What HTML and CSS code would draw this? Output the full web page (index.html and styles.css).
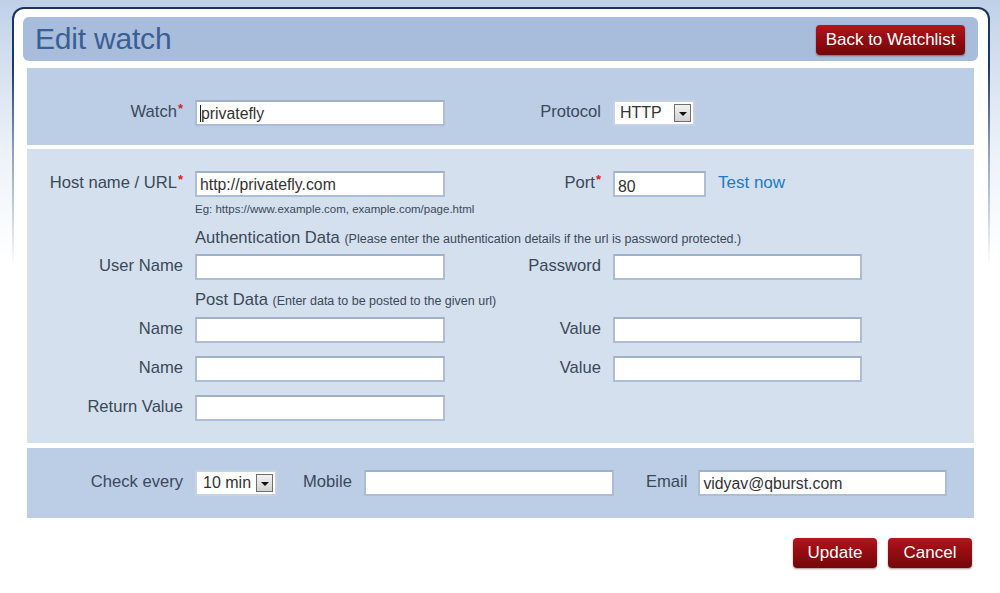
FILE: index.html
```html
<!DOCTYPE html>
<html>
<head>
<meta charset="utf-8">
<link rel="stylesheet" href="styles.css">
</head>
<body>
<div class="frame">
  <div class="inner">
    <div class="header">
      <h1 class="title">Edit watch</h1>
      <a class="btn btn-back">Back to Watchlist</a>
    </div>

    <div class="section s1">
      <div class="grid">
        <label class="lbl">Watch<sup>*</sup></label>
        <div class="input caret">privatefly</div>
        <label class="lbl">Protocol</label>
        <div class="select sel-proto"><span>HTTP</span><i class="drop"></i></div>
      </div>
    </div>

    <div class="section s2">
      <div class="grid">
        <label class="lbl">Host name / URL<sup>*</sup></label>
        <div class="input">http://privatefly.com</div>
        <label class="lbl">Port<sup>*</sup></label>
        <div class="port-cell"><div class="input port">80</div><a class="link">Test now</a></div>
      </div>
      <div class="hint">Eg: https://www.example.com, example.com/page.html</div>
      <div class="subhead auth">Authentication Data <small>(Please enter the authentication details if the url is password protected.)</small></div>
      <div class="grid">
        <label class="lbl">User Name</label>
        <div class="input"></div>
        <label class="lbl">Password</label>
        <div class="input wide2"></div>
      </div>
      <div class="subhead post">Post Data <small>(Enter data to be posted to the given url)</small></div>
      <div class="grid">
        <label class="lbl">Name</label>
        <div class="input"></div>
        <label class="lbl">Value</label>
        <div class="input wide2"></div>
      </div>
      <div class="grid gap-row">
        <label class="lbl">Name</label>
        <div class="input"></div>
        <label class="lbl">Value</label>
        <div class="input wide2"></div>
      </div>
      <div class="grid gap-row">
        <label class="lbl">Return Value</label>
        <div class="input"></div>
      </div>
    </div>

    <div class="section s3">
      <label class="lbl lbl-check">Check every</label>
      <div class="select sel-min"><span>10 min</span><i class="drop"></i></div>
      <label class="lbl lbl-mobile">Mobile</label>
      <div class="input"></div>
      <label class="lbl lbl-email">Email</label>
      <div class="input wide2">vidyav@qburst.com</div>
    </div>

    <div class="actions">
      <a class="btn btn-sm">Update</a>
      <a class="btn btn-sm">Cancel</a>
    </div>
  </div>
</div>
</body>
</html>
```

FILE: styles.css
```css
html, body {
  margin: 0;
  padding: 0;
}
body {
  width: 1000px;
  height: 593px;
  overflow: hidden;
  font-family: "Liberation Sans", Arial, sans-serif;
  background: linear-gradient(to bottom, #bfd0e7 0, #d4e0ef 60px, #eef3f9 160px, #ffffff 260px);
}
.frame {
  margin: 7px 0 0 12px;
  width: 978px;
  padding: 2px 2px 0 2px;
  box-sizing: border-box;
  border-radius: 12px 12px 0 0;
  background: linear-gradient(to bottom, #1a355c 0, #1f3b63 60px, rgba(60, 90, 130, 0.55) 140px, rgba(255, 255, 255, 0) 260px);
}
.inner {
  background: #ffffff;
  border-radius: 10px 10px 0 0;
  padding: 8px 10px 30px 9px;
  height: 584px;
  box-sizing: border-box;
}
.header {
  height: 44px;
  background: #a8bddb;
  border-radius: 6px;
  display: flex;
  align-items: center;
  justify-content: space-between;
  padding: 0 13px 0 12px;
}
.title {
  margin: 0;
  font-weight: normal;
  font-size: 30px;
  color: #3a5e96;
  letter-spacing: -0.2px;
}
.btn {
  display: inline-flex;
  align-items: center;
  justify-content: center;
  height: 30px;
  box-sizing: border-box;
  color: #ffffff;
  font-size: 17px;
  border-radius: 4px;
  background: linear-gradient(to bottom, #b3161b 0, #950c11 45%, #740709 100%);
  box-shadow: 0 1px 2px rgba(60, 0, 0, 0.45);
}
.btn-back {
  width: 149px;
  margin-top: 1px;
}
.section {
  margin: 0 4px;
}
.s1 {
  margin-top: 7px;
  background: #bbcee6;
  padding: 32px 0 19px;
}
.s2 {
  margin-top: 4px;
  background: #d4e0ee;
  padding: 22px 0 22px;
}
.s3 {
  margin-top: 5px;
  background: #bbcee6;
  padding: 22px 0 22px;
  display: flex;
  align-items: center;
}
.grid {
  display: grid;
  grid-template-columns: 156px 250px 144px auto;
  column-gap: 12px;
  align-items: center;
}
.gap-row {
  margin-top: 13px;
}
.lbl {
  font-size: 16.6px;
  color: #3b4858;
  text-align: right;
  white-space: nowrap;
  line-height: 20px;
  position: relative;
  top: -1px;
}
.lbl sup {
  color: #d2232a;
  font-size: 13px;
  font-weight: bold;
  vertical-align: 0;
  position: relative;
  top: -4px;
  margin-left: 1px;
}
.input {
  width: 250px;
  height: 26px;
  box-sizing: border-box;
  background: #ffffff;
  border: 2px solid #adbdd4;
  border-top-color: #9fb0ca;
  font-size: 15.8px;
  color: #333333;
  padding: 3px 0 0 3px;
  line-height: 18px;
  white-space: nowrap;
}
.caret::first-letter {
  border-left: 1px solid #222;
}
.wide2 {
  width: 249px;
}
.port-cell {
  display: flex;
  align-items: center;
}
.input.port {
  width: 93px;
  padding-top: 5px;
}
.link {
  margin-left: 12px;
  font-size: 17px;
  color: #1b7bc8;
  position: relative;
  top: -1px;
}
.select {
  height: 26px;
  box-sizing: border-box;
  background: #ffffff;
  border: 2px solid #c6d3e5;
  display: flex;
  align-items: center;
  justify-content: space-between;
  padding: 0 2px 0 5px;
  font-size: 16px;
  color: #333333;
}
.sel-proto {
  width: 82px;
}
.sel-min {
  width: 82px;
  padding-left: 6px;
}
.drop {
  width: 17px;
  height: 18px;
  box-sizing: border-box;
  border: 1px solid #6f6f6f;
  background: linear-gradient(to bottom, #f2f2f2, #d2d2d2);
  display: flex;
  align-items: center;
  justify-content: center;
}
.drop::after {
  content: "";
  width: 0;
  height: 0;
  border-left: 4px solid transparent;
  border-right: 4px solid transparent;
  border-top: 4px solid #111111;
  margin-top: 1px;
}
.hint {
  margin: 4px 0 0 168px;
  font-size: 11.5px;
  line-height: 16px;
  color: #3b4858;
}
.subhead {
  margin-left: 168px;
  font-size: 16.6px;
  color: #3b4858;
  line-height: 18px;
}
.subhead small {
  font-size: 12.5px;
}
.auth {
  margin-top: 12px;
  margin-bottom: 6px;
}
.post {
  margin-top: 11px;
  margin-bottom: 7px;
}
.lbl-check {
  width: 156px;
  margin-right: 12px;
}
.lbl-mobile {
  margin-left: 26px;
  margin-right: 12px;
}
.lbl-email {
  margin-left: 32px;
  margin-right: 11px;
}
.actions {
  display: flex;
  justify-content: flex-end;
  gap: 11px;
  margin: 20px 6px 0;
}
.btn-sm {
  width: 84px;
}
```
